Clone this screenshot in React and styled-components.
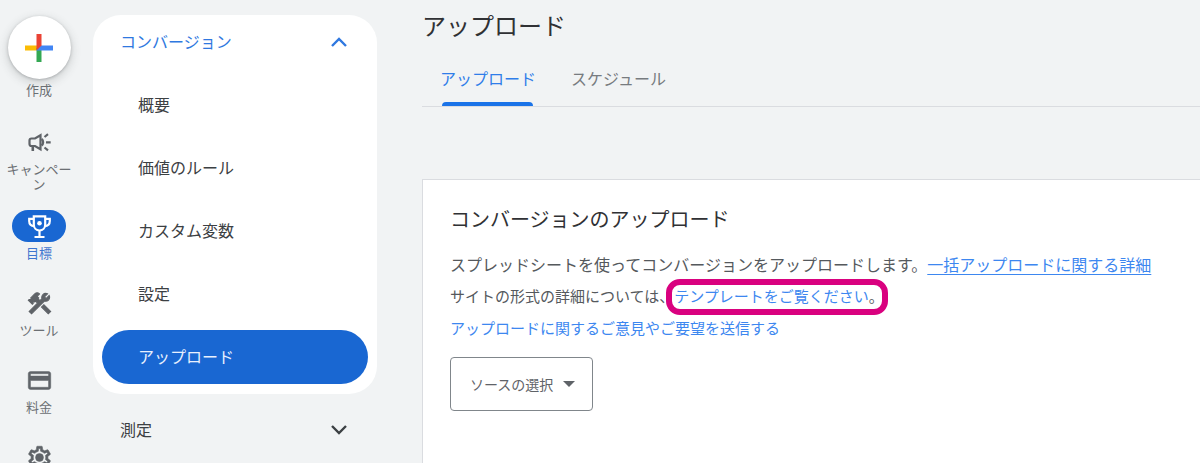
import React from 'react';
import styled, { createGlobalStyle } from 'styled-components';
import { MdConstruction, MdOutlineCreditCard } from 'react-icons/md';

const railItems = [
  { label: 'キャンペーン', icon: <MegaphoneIcon /> },
  { label: '目標', icon: <TrophyIcon />, active: true },
  { label: 'ツール', icon: <MdConstruction stroke="currentColor" strokeWidth="1" /> },
  { label: '料金', icon: <MdOutlineCreditCard stroke="currentColor" strokeWidth="0.4" /> },
  { icon: <GearIcon />, name: '管理者' },
];

const menuItems = ['概要', '価値のルール', 'カスタム変数', '設定', 'アップロード'];

function PlusIcon() {
  return (
    <svg width="28" height="28" viewBox="0 0 28 28" aria-hidden="true">
      <path d="M0 11.5h14l-2.5 5H0z" fill="#fbbc04" />
      <path d="M11.5 14l5 0V28h-5z" fill="#34a853" />
      <path d="M14 11.5h14v5H11.5z" fill="#4285f4" />
      <path d="M11.5 0h5v11.5l-5 5z" fill="#ea4335" />
    </svg>
  );
}

function MegaphoneIcon() {
  return (
    <svg viewBox="0 0 27 27" fill="none" stroke="currentColor" strokeWidth="2.2" aria-hidden="true">
      <path d="M9 9.5H5.5a2 2 0 0 0-2 2V15a2 2 0 0 0 2 2H9l5.500 3.300V6.200z" />
      <path d="M6.800 17v5" strokeWidth="2.600" />
      <path d="M15.500 10a4 4 0 0 1 0 6.500" />
      <path d="M18.500 8l3.500-2.800M20 13.300h4.700M18.500 18.500l3.500 2.800" />
    </svg>
  );
}

function TrophyIcon() {
  return (
    <svg viewBox="0 0 27 27" fill="none" stroke="currentColor" strokeWidth="2.2" aria-hidden="true">
      <path d="M7.800 3.300h11.400v8.200c0 3.500-2.500 6-5.700 6s-5.700-2.500-5.700-6z" />
      <path d="M8 5.800H3.200v2.200c0 3 2 4.900 5.300 5.200M19 5.800h4.800v2.200c0 3-2 4.900-5.300 5.200" />
      <path d="M13.500 17.500v6M8.500 24h10" />
      <circle cx="13.500" cy="10.300" r="2.300" fill="currentColor" stroke="none" />
    </svg>
  );
}

function GearIcon() {
  return (
    <svg viewBox="0 0 24 24" fill="currentColor" stroke="currentColor" strokeWidth="0.5" strokeLinejoin="round" aria-hidden="true">
      <path d="M19.430 12.980c.040-.320.070-.640.070-.980s-.030-.660-.070-.980l2.110-1.650c.190-.150.240-.420.120-.640l-2-3.460a.5.5 0 0 0-.610-.220l-2.490 1c-.520-.400-1.080-.730-1.690-.980l-.380-2.650A.488.488 0 0 0 14 2h-4c-.250 0-.460.180-.490.420l-.380 2.650c-.610.250-1.170.590-1.690.980l-2.490-1a.5.5 0 0 0-.610.220l-2 3.460c-.130.220-.070.490.120.640l2.110 1.650c-.040.320-.070.650-.070.980s.030.660.070.980l-2.110 1.650c-.190.150-.240.420-.120.640l2 3.460c.120.220.390.300.610.220l2.490-1c.520.400 1.080.730 1.690.980l.380 2.650c.030.240.240.420.490.420h4c.250 0 .460-.180.490-.420l.380-2.650c.610-.250 1.170-.590 1.690-.980l2.490 1c.230.090.490 0 .610-.220l2-3.460c.120-.220.070-.490-.120-.640zm-1.980-1.710c.040.310.050.520.050.730s-.020.430-.050.730l-.140 1.130.890.700 1.080.840-.700 1.210-1.270-.510-1.040-.420-.900.680c-.430.320-.840.560-1.250.730l-1.060.430-.160 1.130-.200 1.350h-1.400l-.190-1.350-.160-1.130-1.060-.430c-.430-.180-.830-.410-1.230-.710l-.910-.700-1.060.430-1.270.510-.700-1.210 1.080-.840.890-.700-.140-1.130c-.030-.310-.050-.540-.050-.740s.020-.430.050-.730l.140-1.130-.890-.700-1.080-.840.700-1.210 1.270.510 1.040.420.900-.680c.430-.320.840-.560 1.250-.730l1.060-.430.160-1.130.200-1.350h1.390l.190 1.350.160 1.130 1.060.430c.430.180.830.410 1.230.710l.910.700 1.060-.430 1.270-.510.700 1.210-1.070.850-.890.700z" />
      <circle cx="12" cy="12" r="3.500" />
    </svg>
  );
}

function Chevron({ up }) {
  return (
    <svg width="18" height="18" viewBox="0 0 18 18" fill="none" stroke="currentColor" strokeWidth="2.400" aria-hidden="true">
      <path d={up ? 'M2 14l7-7 7 7' : 'M2 6l7 7 7-7'} />
    </svg>
  );
}

const App = () => {
  return (
    <>
      <GlobalStyle />
      <Page>
        <Rail>
          <CreateButton>
            <span className="circle"><PlusIcon /></span>
            作成
          </CreateButton>
          {railItems.map((item) => (
            <RailButton key={item.label || item.name} $active={item.active} aria-label={item.name}>
              <span className="pill">{item.icon}</span>
              {item.label}
            </RailButton>
          ))}
        </Rail>

        <SideNav>
          <MenuGroup>
            <GroupButton $open aria-expanded="true">
              コンバージョン
              <Chevron up />
            </GroupButton>
            {menuItems.map((item) => (
              <MenuLink key={item} href="#" $active={item === 'アップロード'}>
                {item}
              </MenuLink>
            ))}
          </MenuGroup>
          <MenuGroup $plain>
            <GroupButton aria-expanded="false">
              測定
              <Chevron />
            </GroupButton>
          </MenuGroup>
        </SideNav>

        <Main>
          <Title>アップロード</Title>
          <Tabs role="tablist">
            <Tab role="tab" aria-selected="true" $active>アップロード</Tab>
            <Tab role="tab" aria-selected="false">スケジュール</Tab>
          </Tabs>
          <Card>
            <h2>コンバージョンのアップロード</h2>
            <Lead>
              スプレッドシートを使ってコンバージョンをアップロードします。
              <TextLink href="#" $underline>一括アップロードに関する詳細</TextLink>
            </Lead>
            <Note>
              サイトの形式の詳細については、
              <Highlight>
                <TextLink href="#">テンプレートをご覧ください</TextLink>。
              </Highlight>
            </Note>
            <Note>
              <TextLink href="#">アップロードに関するご意見やご要望を送信する</TextLink>
            </Note>
            <SourcePicker>
              <select aria-label="ソースの選択">
                <option>ソースの選択</option>
              </select>
              <svg width="12" height="6" viewBox="0 0 12 6" aria-hidden="true">
                <path d="M0 0h12L6 6z" fill="#5f6368" />
              </svg>
            </SourcePicker>
          </Card>
        </Main>
      </Page>
    </>
  );
};

export default App;

const GlobalStyle = createGlobalStyle`
  * {
    box-sizing: border-box;
  }

  body {
    margin: 0;
    background-color: #f1f3f4;
    color: #3c4043;
    font-family: 'Noto Sans CJK JP', sans-serif;
    font-size: 16px;
  }

  button,
  select {
    font: inherit;
    color: inherit;
    border: none;
    background: none;
    padding: 0;
    cursor: pointer;
  }

  svg {
    display: block;
    flex-shrink: 0;
  }
`;

const Page = styled.div`
  display: flex;
  height: 100vh;
  overflow: hidden;
`;

const Rail = styled.nav`
  flex: 0 0 78px;
  display: flex;
  flex-direction: column;
  align-items: center;
  gap: 19px;
  padding-top: 16px;
  font-size: 13px;
  line-height: 15px;
  color: #6b6f73;
`;

const CreateButton = styled.button`
  display: flex;
  flex-direction: column;
  align-items: center;
  gap: 3px;
  margin-bottom: 10px;

  .circle {
    display: flex;
    align-items: center;
    justify-content: center;
    width: 63px;
    height: 63px;
    border-radius: 50%;
    background-color: #fff;
    box-shadow: 0 1px 3px rgba(60, 64, 67, 0.3), 0 3px 8px 2px rgba(60, 64, 67, 0.15);
  }
`;

const RailButton = styled.button`
  display: flex;
  flex-direction: column;
  align-items: center;
  gap: 3px;
  flex-shrink: 0;
  width: 68px;
  min-height: 58px;
  color: ${(props) => (props.$active ? '#3f76cf' : 'inherit')};

  .pill {
    display: flex;
    align-items: center;
    justify-content: center;
    width: 54px;
    height: 32px;
    border-radius: 16px;
    background-color: ${(props) => (props.$active ? '#1967d2' : 'transparent')};
    color: ${(props) => (props.$active ? '#fff' : '#5f6368')};
  }

  .pill svg {
    width: 27px;
    height: 27px;
  }

  /* the md icons carry an empty 24x24 path, keep it unstroked */
  .pill path[fill='none'] {
    stroke: none;
  }
`;

const SideNav = styled.nav`
  flex: 0 0 284px;
  margin: 15px 45px 0 15px;
`;

const MenuGroup = styled.div`
  display: flex;
  flex-direction: column;
  gap: 9px;
  padding: ${(props) => (props.$plain ? '9px' : '0 9px 10px')};
  border-radius: 28px;
  background-color: ${(props) => (props.$plain ? 'transparent' : '#fff')};
`;

const GroupButton = styled.button`
  display: flex;
  align-items: center;
  justify-content: space-between;
  height: 54px;
  padding: 0 20px 2px 18px;
  color: ${(props) => (props.$open ? '#2f78e0' : '#3c4043')};
`;

const MenuLink = styled.a`
  display: flex;
  align-items: center;
  height: 54px;
  padding: 0 36px 2px;
  border-radius: 27px;
  text-decoration: none;
  background-color: ${(props) => (props.$active ? '#1967d2' : 'transparent')};
  color: ${(props) => (props.$active ? '#e8f0fe' : '#3c4043')};
`;

const Main = styled.main`
  flex: 1;
  min-width: 0;
  display: flex;
  flex-direction: column;
  padding-top: 9px;
`;

const Title = styled.h1`
  margin: 0 0 11px;
  font-size: 24px;
  line-height: 32px;
  font-weight: 400;
  color: #303134;
`;

const Tabs = styled.div`
  display: flex;
  gap: 35px;
  padding-left: 18px;
  border-bottom: 1px solid #dadce0;
`;

const Tab = styled.button`
  position: relative;
  height: 54px;
  padding-bottom: 2px;
  color: ${(props) => (props.$active ? '#2f7de9' : '#777b7f')};

  &::after {
    content: '';
    display: ${(props) => (props.$active ? 'block' : 'none')};
    position: absolute;
    left: 2px;
    right: 3px;
    bottom: 0;
    height: 4px;
    border-radius: 4px 4px 0 0;
    background-color: #1a73e8;
  }
`;

const Card = styled.section`
  flex: 1;
  margin-top: 72px;
  padding: 25px 27px;
  border: 1px solid #dadce0;
  border-width: 1px 0 0 1px;
  background-color: #fff;

  h2 {
    margin: 0 0 15px;
    font-size: 20px;
    line-height: 28px;
    font-weight: 400;
    color: #303134;
  }
`;

const Lead = styled.p`
  margin: 0;
  line-height: 32px;
  color: #55595d;
`;

const Note = styled(Lead)`
  font-size: 15px;
`;

const TextLink = styled.a`
  color: #3d87f0;
  text-decoration: ${(props) => (props.$underline ? 'underline' : 'none')};
  text-underline-offset: 3px;
`;

const Highlight = styled.span`
  position: relative;
  display: inline-block;

  /* ring drawn over the line, it takes no room in the text */
  &::after {
    content: '';
    position: absolute;
    inset: -1px -4px -3px -8px;
    border: 6px solid #d9017f;
    border-radius: 14px;
    pointer-events: none;
  }
`;

const SourcePicker = styled.div`
  position: relative;
  display: inline-block;
  margin-top: 13px;

  select {
    display: block;
    appearance: none;
    height: 54px;
    padding: 0 38px 0 19px;
    border: 1px solid #80868b;
    border-radius: 4px;
    font-size: 14px;
    color: #5f6368;
  }

  svg {
    position: absolute;
    top: 24px;
    right: 18px;
    pointer-events: none;
  }
`;
